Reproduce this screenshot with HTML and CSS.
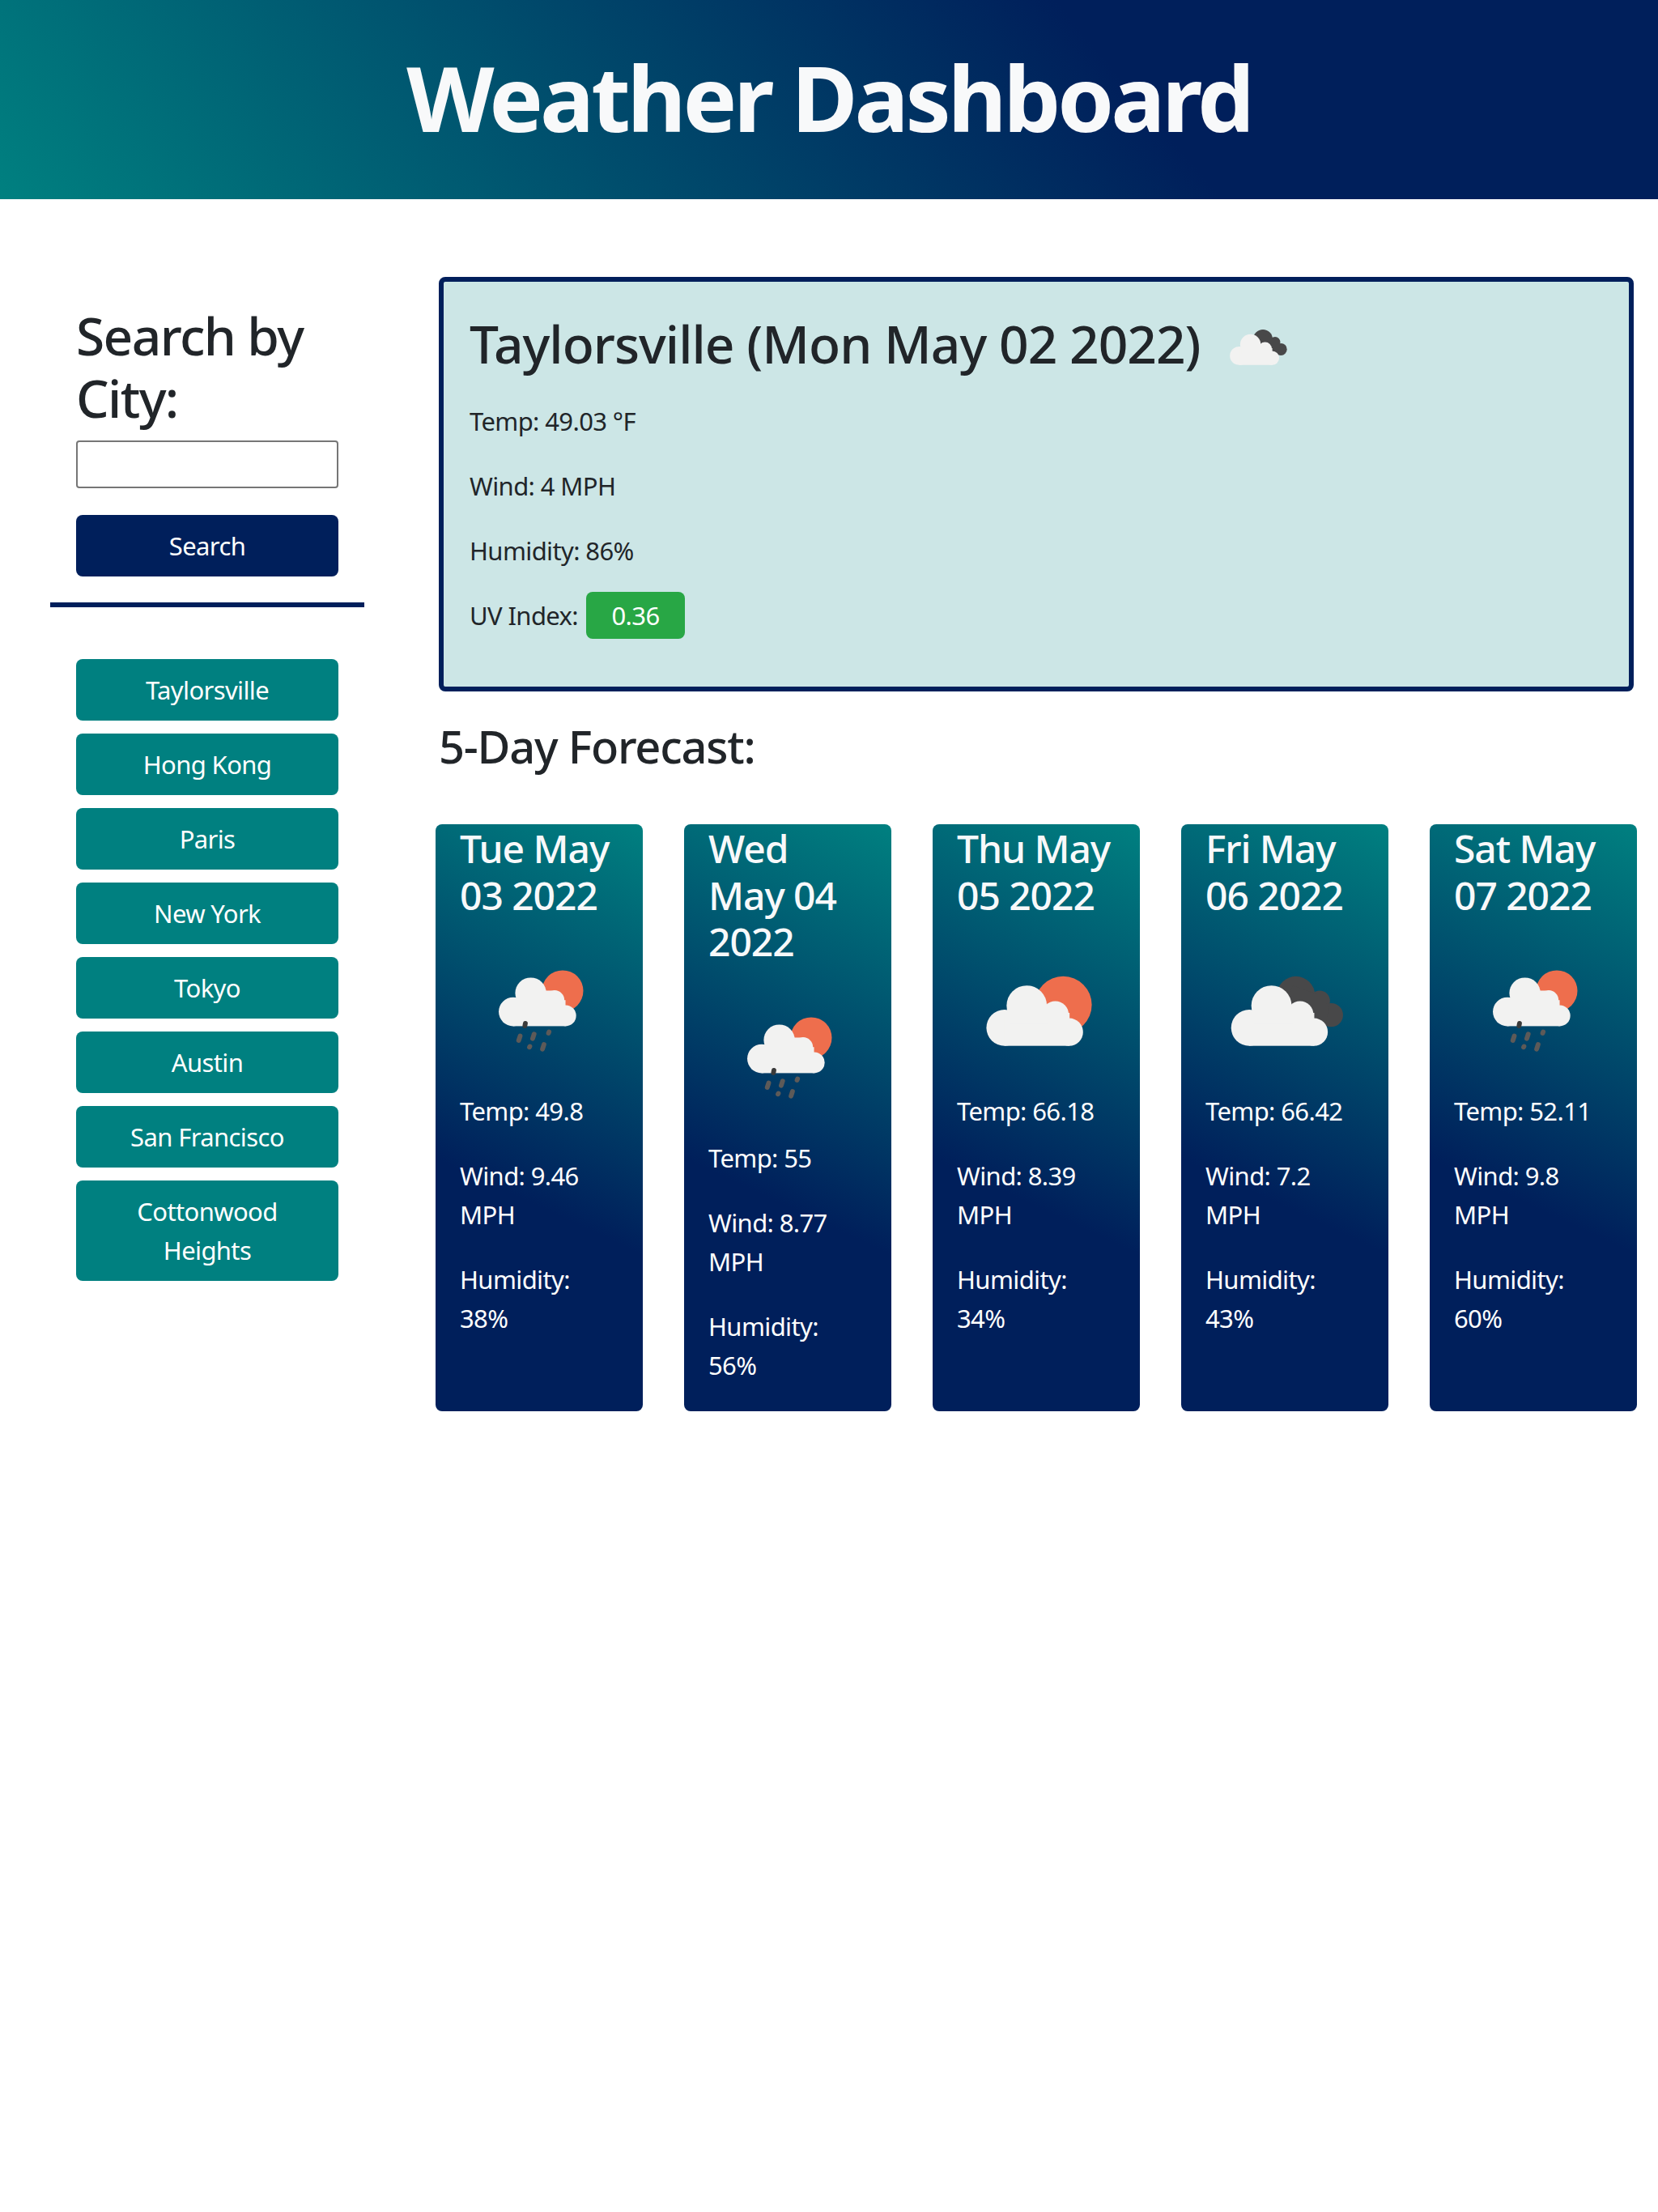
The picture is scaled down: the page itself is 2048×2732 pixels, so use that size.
FILE: index.html
```html
<!DOCTYPE html>
<html lang="en">
<head>
<meta charset="utf-8">
<title>Weather Dashboard</title>
<link rel="stylesheet" href="styles.css">
</head>
<body>
<svg class="defs" width="0" height="0" aria-hidden="true">
  <defs>
    <g id="cloud">
      <circle cx="30" cy="61.4" r="11.4"/>
      <circle cx="44" cy="47.5" r="12.7"/>
      <circle cx="62" cy="53" r="8.4"/>
      <circle cx="70.8" cy="64.1" r="8.7"/>
      <rect x="30" y="52" width="41" height="20.8"/>
      <rect x="33" y="47" width="25" height="12"/>
    </g>
    <symbol id="i02" viewBox="0 0 100 100">
      <circle cx="67" cy="47" r="18" fill="#ee6e4d"/>
      <use href="#cloud" fill="#f2f2f1"/>
    </symbol>
    <symbol id="i04" viewBox="0 0 100 100">
      <g fill="#484849">
        <circle cx="57" cy="41" r="12"/>
        <circle cx="72" cy="44.5" r="6.5"/>
        <circle cx="79.2" cy="53.4" r="7.5"/>
        <polygon points="55,35 70,40 78,48 76,58 62,60 50,45"/>
      </g>
      <use href="#cloud" x="-2.4" fill="#f2f2f1"/>
    </symbol>
    <symbol id="i10" viewBox="0 0 100 100">
      <circle cx="64.8" cy="38.2" r="13" fill="#ee6e4d"/>
      <g fill="#f2f2f1">
        <circle cx="33.6" cy="51.3" r="9.1"/>
        <circle cx="44.7" cy="39.6" r="9.8"/>
        <circle cx="59.7" cy="44" r="6.2"/>
        <circle cx="66.7" cy="53.8" r="6.6"/>
        <rect x="33.6" y="44" width="33" height="16.4"/>
        <rect x="38" y="38" width="20" height="10"/>
      </g>
      <path d="M41.3 58.6l-.3 1.6" stroke="#3a3a3a" stroke-width="3" stroke-linecap="round"/>
      <g stroke="#5d5a58" stroke-width="3" stroke-linecap="round">
        <path d="M38 66.6l-.9 2.8"/>
        <path d="M46.8 65.4l-.9 2.8"/>
        <path d="M56.2 64l-.3 .8"/>
        <path d="M44.1 73.2l-.2 .4"/>
        <path d="M53 72l-.9 2.8"/>
      </g>
    </symbol>
  </defs>
</svg>

<header class="site-header">
  <h1 class="site-title">Weather Dashboard</h1>
</header>

<div class="layout">
  <aside class="sidebar">
    <form class="search">
      <h2 class="heading-xl heading-search">Search by City:</h2>
      <input class="search-input" type="text" aria-label="City">
      <button class="btn btn-navy" type="button">Search</button>
    </form>
    <hr class="rule">
    <div class="cities">
      <button class="btn btn-teal" type="button">Taylorsville</button>
      <button class="btn btn-teal" type="button">Hong Kong</button>
      <button class="btn btn-teal" type="button">Paris</button>
      <button class="btn btn-teal" type="button">New York</button>
      <button class="btn btn-teal" type="button">Tokyo</button>
      <button class="btn btn-teal" type="button">Austin</button>
      <button class="btn btn-teal" type="button">San Francisco</button>
      <button class="btn btn-teal" type="button">Cottonwood Heights</button>
    </div>
  </aside>

  <main class="main">
    <section class="current">
      <div class="current-title">
        <h2 class="heading-xl heading-city">Taylorsville (Mon May 02 2022)</h2>
        <svg class="current-icon"><use href="#i04"/></svg>
      </div>
      <p>Temp: 49.03 °F</p>
      <p>Wind: 4 MPH</p>
      <p>Humidity: 86%</p>
      <p>UV Index: <span class="uv">0.36</span></p>
    </section>

    <h3 class="forecast-title">5-Day Forecast:</h3>

    <div class="forecast">
      <article class="day">
        <h4 class="day-date">Tue May 03 2022</h4>
        <svg class="day-icon"><use href="#i10"/></svg>
        <p>Temp: 49.8</p>
        <p>Wind: 9.46 MPH</p>
        <p>Humidity: 38%</p>
      </article>
      <article class="day">
        <h4 class="day-date">Wed May 04 2022</h4>
        <svg class="day-icon"><use href="#i10"/></svg>
        <p>Temp: 55</p>
        <p>Wind: 8.77 MPH</p>
        <p>Humidity: 56%</p>
      </article>
      <article class="day">
        <h4 class="day-date">Thu May 05 2022</h4>
        <svg class="day-icon"><use href="#i02"/></svg>
        <p>Temp: 66.18</p>
        <p>Wind: 8.39 MPH</p>
        <p>Humidity: 34%</p>
      </article>
      <article class="day">
        <h4 class="day-date">Fri May 06 2022</h4>
        <svg class="day-icon"><use href="#i04"/></svg>
        <p>Temp: 66.42</p>
        <p>Wind: 7.2 MPH</p>
        <p>Humidity: 43%</p>
      </article>
      <article class="day">
        <h4 class="day-date">Sat May 07 2022</h4>
        <svg class="day-icon"><use href="#i10"/></svg>
        <p>Temp: 52.11</p>
        <p>Wind: 9.8 MPH</p>
        <p>Humidity: 60%</p>
      </article>
    </div>
  </main>
</div>
</body>
</html>
```
FILE: styles.css
```css
* { box-sizing: border-box; }

html, body { margin: 0; padding: 0; }

body {
  background: #fff;
  color: #212529;
  font-family: "Noto Sans", "Open Sans", sans-serif;
  font-size: 31px;
  line-height: 48px;
  letter-spacing: -0.02em;
}

.defs { position: absolute; }

p { margin: 0 0 32px; }

.site-header {
  height: 246px;
  padding-bottom: 6px;
  display: flex;
  align-items: center;
  justify-content: center;
  background: linear-gradient(50deg, #008080 0%, #001f5b 67%);
}

.site-title {
  margin: 0;
  color: #f8f9fa;
  font-size: 112px;
  font-weight: 700;
  line-height: 134px;
  letter-spacing: -0.036em;
}

.layout {
  display: grid;
  grid-template-columns: 512px 1fr;
  margin-top: 96px;
}

.sidebar { padding: 0 62px; }

.search { padding: 34px 32px 0; }

.heading-xl {
  margin: 0;
  font-size: 64px;
  font-weight: 500;
  line-height: 77px;
  letter-spacing: -0.025em;
}

.heading-search { margin-bottom: 14px; }

.heading-city {
  padding-bottom: 7px;
  letter-spacing: -0.015em;
}

.search-input {
  display: block;
  width: 100%;
  height: 59px;
  margin: 0 0 33px;
  background: #fff;
  border: 2px solid #767676;
  border-radius: 4px;
}

.btn {
  display: block;
  width: 100%;
  padding: 14px 24px;
  border: 0;
  border-radius: 8px;
  color: #fff;
  font: inherit;
  letter-spacing: inherit;
  text-align: center;
}

.btn-navy { background: #001f5b; }
.btn-teal { background: #008080; }

.rule {
  height: 6px;
  margin: 32px 0 64px;
  border: 0;
  background: #001f5b;
}

.cities {
  display: flex;
  flex-direction: column;
  gap: 16px;
  padding: 0 32px;
}

.main { padding: 0 30px; }

.current {
  height: 512px;
  padding: 30px 32px 0;
  background: #cce6e6;
  border: 6px solid #001f5b;
  border-radius: 8px;
}

.current-title {
  display: flex;
  align-items: center;
  gap: 20px;
  height: 100px;
  margin-bottom: 18px;
}

.current-icon {
  flex: none;
  width: 100px;
  height: 100px;
}

.uv {
  margin-left: 3px;
  padding: 8px 31px;
  background: #28a745;
  border-radius: 8px;
  color: #fff;
}

.forecast-title {
  margin: 34px 0 63px;
  font-size: 56px;
  font-weight: 500;
  line-height: 67px;
  letter-spacing: -0.022em;
}

.forecast {
  display: grid;
  grid-template-columns: repeat(5, 256px);
  justify-content: space-between;
  margin: 0 -4px;
}

.day {
  padding: 1px 30px 1px;
  background: linear-gradient(205deg, #008080 0%, #001f5b 63%);
  border-radius: 8px;
  color: #fff;
}

.day-date {
  margin: 0 0 15px;
  color: #f8f9fa;
  font-size: 48px;
  font-weight: 500;
  line-height: 57.6px;
  letter-spacing: -0.022em;
}

.day-icon {
  display: block;
  width: 196px;
  height: 196px;
  margin-bottom: 3px;
}
```
